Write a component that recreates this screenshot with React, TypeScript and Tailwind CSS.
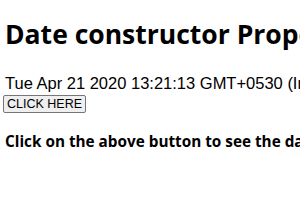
export default function App() {
  return (
    <div className="flex flex-col items-start w-[300px] h-[210px] overflow-hidden bg-white text-black pl-[5px]">
      <h1 className="pt-[18px] text-[26.5px] leading-[32px] font-bold whitespace-nowrap font-['Open_Sans',sans-serif]">
        Date constructor Property
      </h1>
      <div className="mt-[24px] text-[16.5px] leading-[18px] whitespace-nowrap font-['Liberation_Sans',Arial,sans-serif]">
        Tue Apr 21 2020 13:21:13 GMT+0530 (India Standard Time)
      </div>
      <button className="-ml-[2px] mt-[3px] h-[18px] w-[83px] border border-[#767676] bg-[#efefef] text-[12.5px] leading-[14px] rounded-[2px] font-['Liberation_Sans',Arial,sans-serif]">
        CLICK HERE
      </button>
      <p className="mt-[19px] text-[15.3px] leading-[18px] font-bold whitespace-nowrap font-['Open_Sans',sans-serif]">
        Click on the above button to see the date
      </p>
    </div>
  );
}
